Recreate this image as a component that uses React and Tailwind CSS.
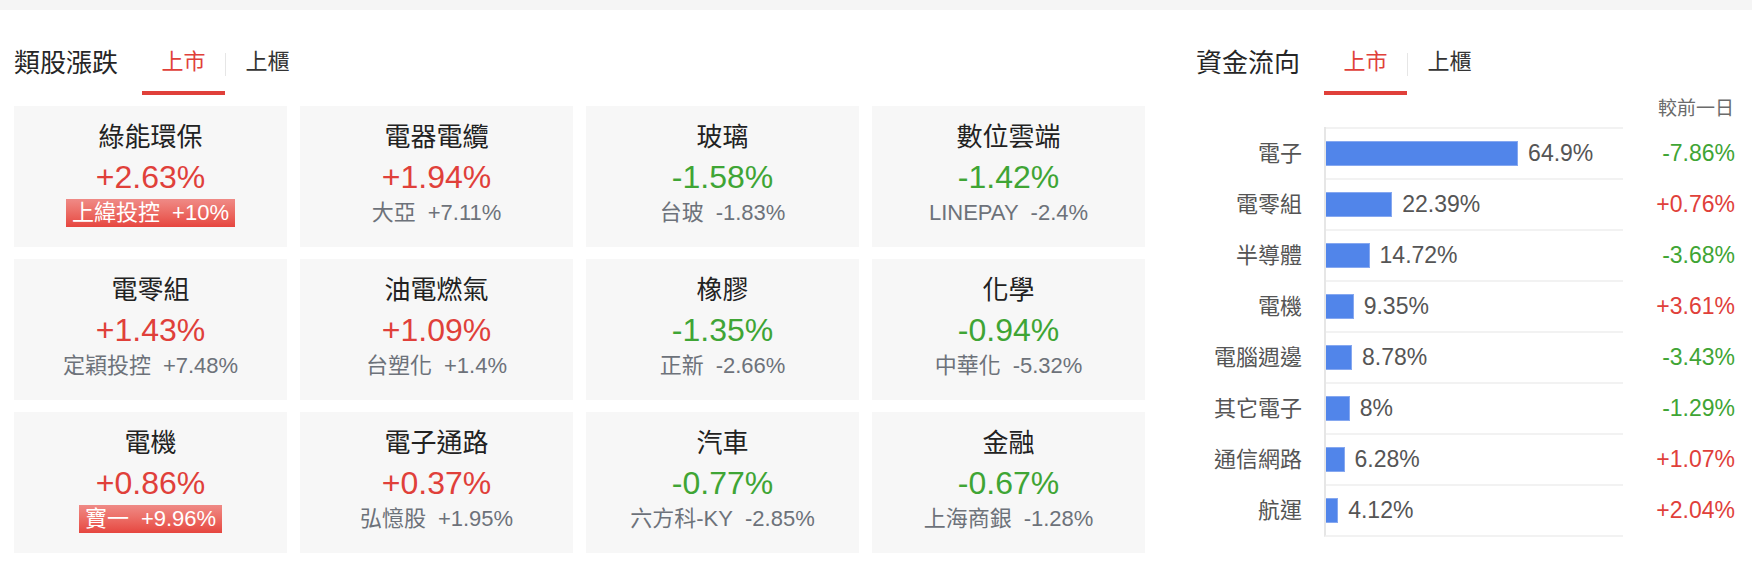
import React from "react";

const FONT = { fontFamily: '"Liberation Sans", "Noto Sans CJK TC", sans-serif' };

const sectors = [
  { name: "綠能環保", pct: "+2.63%", stock: "上緯投控", chg: "+10%", limit: true },
  { name: "電器電纜", pct: "+1.94%", stock: "大亞", chg: "+7.11%" },
  { name: "玻璃", pct: "-1.58%", stock: "台玻", chg: "-1.83%" },
  { name: "數位雲端", pct: "-1.42%", stock: "LINEPAY", chg: "-2.4%" },
  { name: "電零組", pct: "+1.43%", stock: "定穎投控", chg: "+7.48%" },
  { name: "油電燃氣", pct: "+1.09%", stock: "台塑化", chg: "+1.4%" },
  { name: "橡膠", pct: "-1.35%", stock: "正新", chg: "-2.66%" },
  { name: "化學", pct: "-0.94%", stock: "中華化", chg: "-5.32%" },
  { name: "電機", pct: "+0.86%", stock: "寶一", chg: "+9.96%", limit: true },
  { name: "電子通路", pct: "+0.37%", stock: "弘憶股", chg: "+1.95%" },
  { name: "汽車", pct: "-0.77%", stock: "六方科-KY", chg: "-2.85%" },
  { name: "金融", pct: "-0.67%", stock: "上海商銀", chg: "-1.28%" },
];

const flows = [
  { name: "電子", share: 64.9, label: "64.9%", diff: "-7.86%" },
  { name: "電零組", share: 22.39, label: "22.39%", diff: "+0.76%" },
  { name: "半導體", share: 14.72, label: "14.72%", diff: "-3.68%" },
  { name: "電機", share: 9.35, label: "9.35%", diff: "+3.61%" },
  { name: "電腦週邊", share: 8.78, label: "8.78%", diff: "-3.43%" },
  { name: "其它電子", share: 8, label: "8%", diff: "-1.29%" },
  { name: "通信網路", share: 6.28, label: "6.28%", diff: "+1.07%" },
  { name: "航運", share: 4.12, label: "4.12%", diff: "+2.04%" },
];

function Header({ title }) {
  return (
    <div className="h-[85px] flex items-start">
      <div className="mt-[35px] text-[26px] leading-[36px] text-[#262626] whitespace-nowrap">{title}</div>
      <div className="mt-[34px] ml-[24px] flex items-start">
        <div className="w-[83px] flex flex-col items-center">
          <div className="text-[22px] leading-[36px] text-[#e0403a]">上市</div>
          <div className="mt-[11px] h-[4px] w-full bg-[#e0403a]" />
        </div>
        <div className="mt-[9px] w-px h-[23px] bg-[#e6e6e6]" />
        <div className="w-[83px] flex flex-col items-center">
          <div className="text-[22px] leading-[36px] text-[#333]">上櫃</div>
          <div className="mt-[11px] h-[4px] w-full" />
        </div>
      </div>
    </div>
  );
}

function SectorCard({ s }) {
  const up = s.pct.startsWith("+");
  return (
    <div className="h-[141px] bg-[#f7f7f7] flex flex-col items-center pt-[13px]">
      <div className="text-[26px] leading-[36px] text-[#222]">{s.name}</div>
      <div className={`mt-[3px] text-[32px] leading-[38px] ${up ? "text-[#e0403a]" : "text-[#3fa535]"}`}>{s.pct}</div>
      {s.limit ? (
        <div className="mt-[3px] h-[28px] px-[6px] flex items-center text-[22px] leading-[28px] text-white bg-gradient-to-b from-[#ef8a86] to-[#e6453f]">
          <span>{s.stock}</span>
          <span className="ml-[12px]">{s.chg}</span>
        </div>
      ) : (
        <div className="mt-[3px] h-[28px] flex items-center text-[22px] leading-[28px] text-[#6d727a]">
          <span>{s.stock}</span>
          <span className="ml-[12px]">{s.chg}</span>
        </div>
      )}
    </div>
  );
}

export default function App() {
  return (
    <div className="w-[1752px] h-[566px] bg-white overflow-hidden" style={FONT}>
      <div className="h-[10px] bg-[#f5f5f5]" />
      <div className="flex pl-[14px]">
        {/* sector performance */}
        <section className="w-[1131px]">
          <Header title="類股漲跌" />
          <div className="mt-[11px] grid grid-cols-4 gap-x-[13px] gap-y-[12px]">
            {sectors.map((s) => (
              <SectorCard key={s.name} s={s} />
            ))}
          </div>
        </section>

        {/* money flow */}
        <section className="ml-[51px] w-[541px]">
          <Header title="資金流向" />
          <div className="mt-[2px] pr-[3px] text-right text-[19px] leading-[24px] text-[#6b6b6b]">較前一日</div>
          <div className="mt-[6px] flex">
            <div className="w-[106px] flex flex-col">
              {flows.map((f) => (
                <div key={f.name} className="h-[51px] pt-[2px] flex items-center justify-end text-[22px] text-[#555]">
                  {f.name}
                </div>
              ))}
            </div>
            <div className="ml-[22px] w-[299px] border-l-2 border-[#e6e6e6] border-b-2 border-b-[#f2f2f2]">
              {flows.map((f) => (
                <div key={f.name} className="h-[51px] border-t-2 border-[#f2f2f2] flex items-center">
                  <div
                    className="h-[25px] bg-[#5185ea] border border-[#86a8f0] border-l-0"
                    style={{ width: `${f.share * 2.96}px` }}
                  />
                  <span className="ml-[10px] text-[23px] text-[#555]">{f.label}</span>
                </div>
              ))}
            </div>
            <div className="flex-1 flex flex-col pr-[2px]">
              {flows.map((f) => (
                <div
                  key={f.name}
                  className={`h-[51px] pt-[2px] flex items-center justify-end text-[23px] ${f.diff.startsWith("+") ? "text-[#e0403a]" : "text-[#3fa535]"}`}
                >
                  {f.diff}
                </div>
              ))}
            </div>
          </div>
        </section>
      </div>
    </div>
  );
}
